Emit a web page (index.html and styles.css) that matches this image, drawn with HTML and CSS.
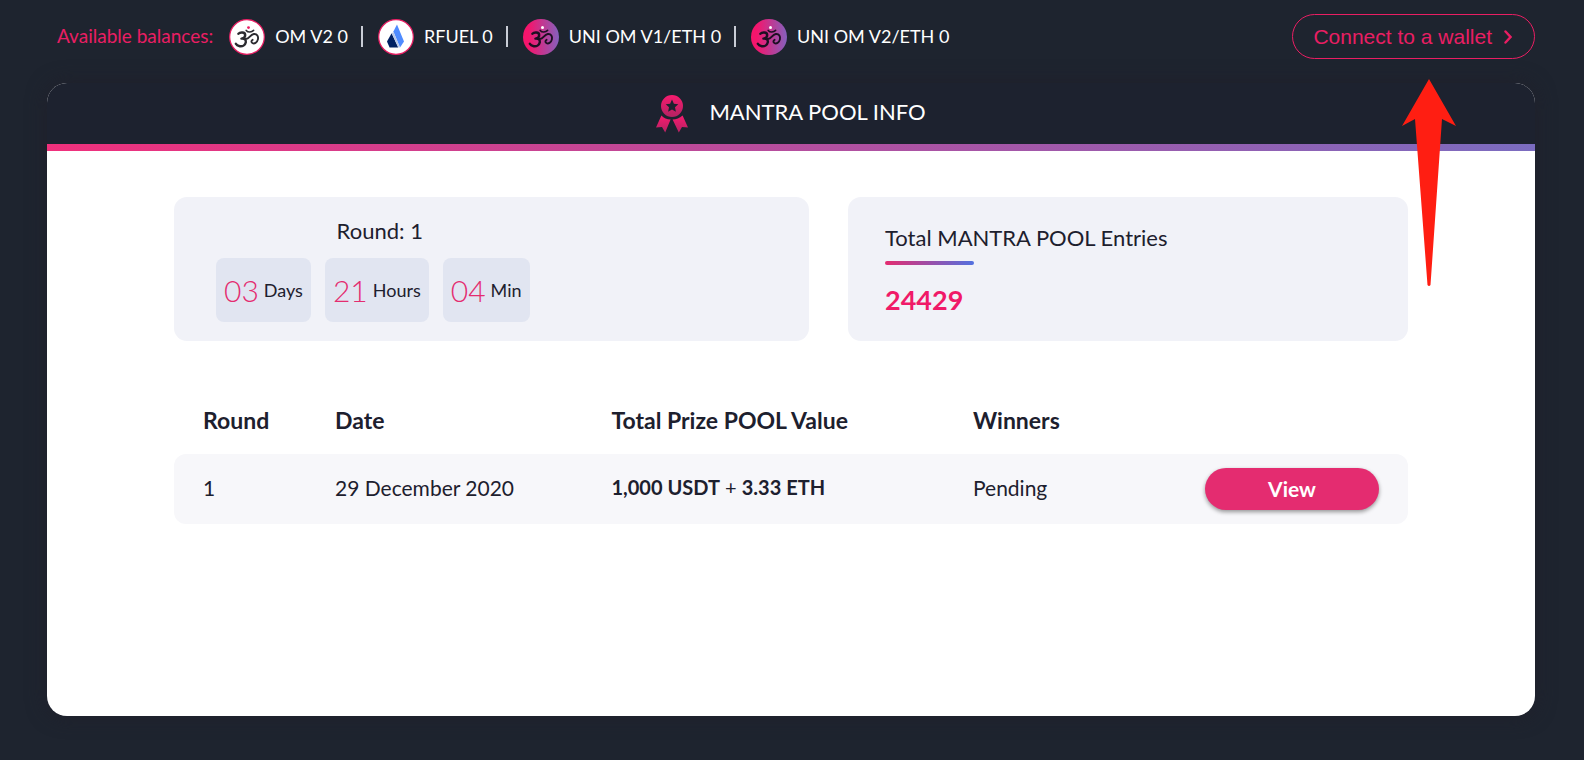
FILE: index.html
```html
<!DOCTYPE html>
<html lang="en">
<head>
<meta charset="utf-8">
<title>Mantra Pool Info</title>
<link rel="stylesheet" href="styles.css">
</head>
<body>
<svg class="defs" width="0" height="0" aria-hidden="true">
  <defs>
    <linearGradient id="badge" x1="0" y1="0" x2="1" y2="0"><stop offset="0.15" stop-color="#f5156c"/><stop offset="1" stop-color="#8560bd"/></linearGradient>
    <linearGradient id="ribbon" x1="0" y1="0" x2="0" y2="1"><stop offset="0" stop-color="#f81b6f"/><stop offset="1" stop-color="#b32262"/></linearGradient>
    <g id="om" fill="none" stroke-linecap="round" stroke-linejoin="round">
      <path stroke-width="2.4" d="M9.4 14.8C11 13 16.2 12.8 16.2 16C16.2 18.2 14.6 19.4 12.4 19.6C15.4 19.3 17.2 20.8 16.8 23.2C16.2 26.4 13.4 27.6 10.8 27.2C8.6 26.8 7.4 26 6.8 24.8"/>
      <path stroke-width="1.9" d="M15.5 19.8C20.5 21.2 20.4 15.8 24.8 15C28.2 14.6 29.6 17.6 28.9 20.4C28.2 23.8 25.2 25.2 23.4 24C22 23 22.2 21.4 23.6 20.8"/>
      <path stroke-width="1.6" d="M17.2 11.4C19 13.6 22.6 13.4 24.6 11.4"/>
    </g>
  </defs>
</svg>
<header class="topbar">
  <div class="balances">
    <span class="balances-label">Available balances:</span>
    <ul class="balance-list">
      <li class="balance">
        <svg class="coin" viewBox="0 0 36 36" aria-hidden="true"><circle cx="18" cy="18" r="17.3" fill="#fff" stroke="#e91e63" stroke-width="1.2"/><use href="#om" stroke="#2b2b30"/><circle cx="19.5" cy="8.6" r="1.4" fill="#e91e63"/></svg>
        <span>OM V2 0</span>
      </li>
      <li class="balance">
        <svg class="coin" viewBox="0 0 36 36" aria-hidden="true"><circle cx="18" cy="18" r="17.3" fill="#fff" stroke="#e91e63" stroke-width="1.2"/><path fill="#4f8bff" d="M19 5.6L26 22.6L22 28.4L15.4 12.6Z"/><path fill="#002062" d="M13.6 14.2L20.2 28.6H11.6L9 22.4Z"/><path fill="#b8c8ea" d="M15.4 12.8L22 28.4L20.4 28.6L13.8 14.4Z"/></svg>
        <span>RFUEL 0</span>
      </li>
      <li class="balance">
        <svg class="coin" viewBox="0 0 36 36" aria-hidden="true"><circle cx="18" cy="18" r="18" fill="url(#badge)"/><use href="#om" stroke="#1c0f22"/><circle cx="19.5" cy="8.6" r="1.5" fill="#fff"/></svg>
        <span>UNI OM V1/ETH 0</span>
      </li>
      <li class="balance">
        <svg class="coin" viewBox="0 0 36 36" aria-hidden="true"><circle cx="18" cy="18" r="18" fill="url(#badge)"/><use href="#om" stroke="#1c0f22"/><circle cx="19.5" cy="8.6" r="1.5" fill="#fff"/></svg>
        <span>UNI OM V2/ETH 0</span>
      </li>
    </ul>
  </div>
  <div class="wallet">
    <button class="connect" type="button">Connect to a wallet
      <svg class="chevron" viewBox="0 0 8 14" aria-hidden="true"><path d="M1.5 1.5L6.5 7L1.5 12.5" fill="none" stroke="currentColor" stroke-width="2.4" stroke-linecap="round"/></svg>
    </button>
    <svg class="pointer" viewBox="0 0 54 207" aria-hidden="true"><path fill="#ff1e12" d="M27 0L54 47L40 40L28.5 206Q27 208 25.5 206L13 40L0 47Z"/></svg>
  </div>
</header>
<main class="card">
  <div class="card-head">
    <svg class="ribbon" viewBox="0 0 32 38" aria-hidden="true">
      <path fill="url(#ribbon)" fill-rule="evenodd" d="M16 0A11 11 0 1 1 16 22A11 11 0 1 1 16 0ZM16 4.6L14.1 8.7L9.7 9.2L13 12.3L12.1 16.8L16 14.6L19.9 16.8L19 12.3L22.3 9.2L17.9 8.7Z"/>
      <path fill="url(#ribbon)" d="M5.4 20.6Q9 24.4 14.6 24.6L9.2 37.6L6 32L0 32.6Z"/>
      <path fill="url(#ribbon)" d="M26.6 20.6Q22 24.4 16.6 24.6L22.8 37.6L26 32L32 32.6Z"/>
    </svg>
    <h1 class="card-title">MANTRA POOL INFO</h1>
  </div>
  <div class="card-body">
    <div class="stats">
      <section class="panel countdown">
        <div class="timer">
          <h2 class="timer-title">Round: 1</h2>
          <div class="tiles">
            <div class="tile"><span class="tile-num">03</span><span>Days</span></div>
            <div class="tile"><span class="tile-num">21</span><span>Hours</span></div>
            <div class="tile"><span class="tile-num">04</span><span>Min</span></div>
          </div>
        </div>
      </section>
      <section class="panel entries">
        <h2 class="entries-title">Total MANTRA POOL Entries</h2>
        <p class="entries-num">24429</p>
      </section>
    </div>
    <table class="rounds">
      <colgroup><col class="c-round"><col class="c-date"><col class="c-prize"><col class="c-winners"><col></colgroup>
      <thead>
        <tr><th scope="col">Round</th><th scope="col">Date</th><th scope="col">Total Prize POOL Value</th><th scope="col">Winners</th><td></td></tr>
      </thead>
      <tbody>
        <tr><td>1</td><td>29 December 2020</td><td class="prize"><b>1,000 USDT</b> + <b>3.33 ETH</b></td><td>Pending</td><td class="action"><button class="view" type="button">View</button></td></tr>
      </tbody>
    </table>
  </div>
</main>
</body>
</html>
```
FILE: styles.css
```css
* {
  box-sizing: border-box;
}

body {
  margin: 0;
  min-height: 100vh;
  display: flex;
  flex-direction: column;
  padding: 14px 49px 44px 47px;
  background: #1e242f;
  color: #1d202e;
  font-family: Lato, "Liberation Sans", sans-serif;
  font-size: 20px;
}

h1, h2, p, ul {
  margin: 0;
  padding: 0;
  font-weight: 400;
}

.defs {
  position: absolute;
}

.topbar {
  display: flex;
  align-items: center;
  justify-content: space-between;
  padding-left: 10px;
  margin-bottom: 24px;
}

.balances {
  display: flex;
  align-items: center;
  gap: 16px;
  font-size: 18px;
  line-height: 24px;
  white-space: nowrap;
}

.balances-label {
  color: #e91e63;
  font-size: 19px;
}

.balance-list {
  display: flex;
  list-style: none;
  color: #fff;
}

.balance {
  display: flex;
  align-items: center;
  gap: 10px;
}

.balance > span,
.balances-label {
  padding-bottom: 2px;
}

.balance + .balance::before {
  content: "";
  width: 2px;
  height: 21px;
  margin: 0 5px 0 13px;
  background: #c9cdd6;
}

.coin {
  width: 36px;
  height: 36px;
}

.wallet {
  position: relative;
}

.connect {
  display: flex;
  align-items: center;
  gap: 12px;
  height: 45px;
  padding: 0 22px 0 20px;
  border: 1px solid #e91e63;
  border-radius: 23px;
  background: none;
  color: #e91e63;
  font: 21px "Liberation Sans", Arial, sans-serif;
  white-space: nowrap;
}

.chevron {
  width: 8px;
  height: 14px;
}

.pointer {
  position: absolute;
  top: 65px;
  right: 79px;
  width: 54px;
  height: 207px;
}

.card {
  flex: 1;
  border-radius: 20px;
  background: #fff;
  box-shadow: 0 0 20px #20202b;
}

.card-head {
  display: flex;
  align-items: center;
  justify-content: center;
  gap: 21px;
  height: 68px;
  border-bottom: 7px solid;
  border-image: linear-gradient(90deg, #f0307c, #7b6cc0) 1;
  border-top-left-radius: 20px;
  border-top-right-radius: 20px;
  background: #1d222f;
  color: #fff;
}

.ribbon {
  width: 32px;
  height: 38px;
}

.card-title {
  padding-bottom: 4px;
  font-size: 22px;
  line-height: 28px;
}

.card-body {
  padding: 46px 127px;
}

.stats {
  display: grid;
  grid-template-columns: 635fr 560fr;
  gap: 39px;
}

.panel {
  height: 144px;
  border-radius: 13px;
  background: #f1f2f8;
}

.countdown {
  display: flex;
  padding: 20px 42px;
}

.timer-title {
  margin-bottom: 13px;
  padding-left: 14px;
  font-size: 22px;
  line-height: 28px;
  text-align: center;
}

.tiles {
  display: flex;
  gap: 14px;
}

.tile {
  display: flex;
  align-items: center;
  gap: 5px;
  height: 64px;
  padding: 0 8px;
  border-radius: 8px;
  background: #e1e5f1;
  font-size: 18px;
  line-height: 64px;
}

.tile-num {
  color: #e42c70;
  font-size: 30px;
  font-weight: 300;
}

.entries {
  padding: 27px 37px;
}

.entries-title {
  font-size: 22px;
  line-height: 28px;
}

.entries-title::after {
  content: "";
  display: block;
  width: 89px;
  height: 4px;
  margin-top: 9px;
  border-radius: 2px;
  background: linear-gradient(90deg, #e42c70, #5271e0);
}

.entries-num {
  margin-top: 19px;
  color: #f01a68;
  font-size: 27px;
  font-weight: 700;
  line-height: 32px;
}

.rounds {
  width: 100%;
  margin-top: 44px;
  border-spacing: 0;
  table-layout: fixed;
}

.c-round {
  width: 10.7%;
}

.c-date {
  width: 22.4%;
}

.c-prize {
  width: 29.3%;
}

.c-winners {
  width: 18.8%;
}

.rounds th,
.rounds td {
  padding: 0 0 0 29px;
  text-align: left;
  white-space: nowrap;
}

.rounds th {
  height: 69px;
  font-size: 23px;
}

.rounds tbody td {
  height: 70px;
  padding-bottom: 4px;
  background: #f7f7fa;
  font-size: 21px;
}

.rounds tbody .prize {
  font-size: 20px;
}

.rounds tbody td:first-child {
  border-radius: 12px 0 0 12px;
}

.rounds tbody .action {
  padding-right: 29px;
  padding-bottom: 0;
  border-radius: 0 12px 12px 0;
}

.view {
  display: block;
  width: 100%;
  height: 42px;
  padding-bottom: 3px;
  border: 0;
  border-radius: 21px;
  background: #e42c70;
  box-shadow: 0 2px 4px rgba(0, 0, 0, 0.4);
  color: #fff;
  font: 700 21px Lato, "Liberation Sans", sans-serif;
}
```
